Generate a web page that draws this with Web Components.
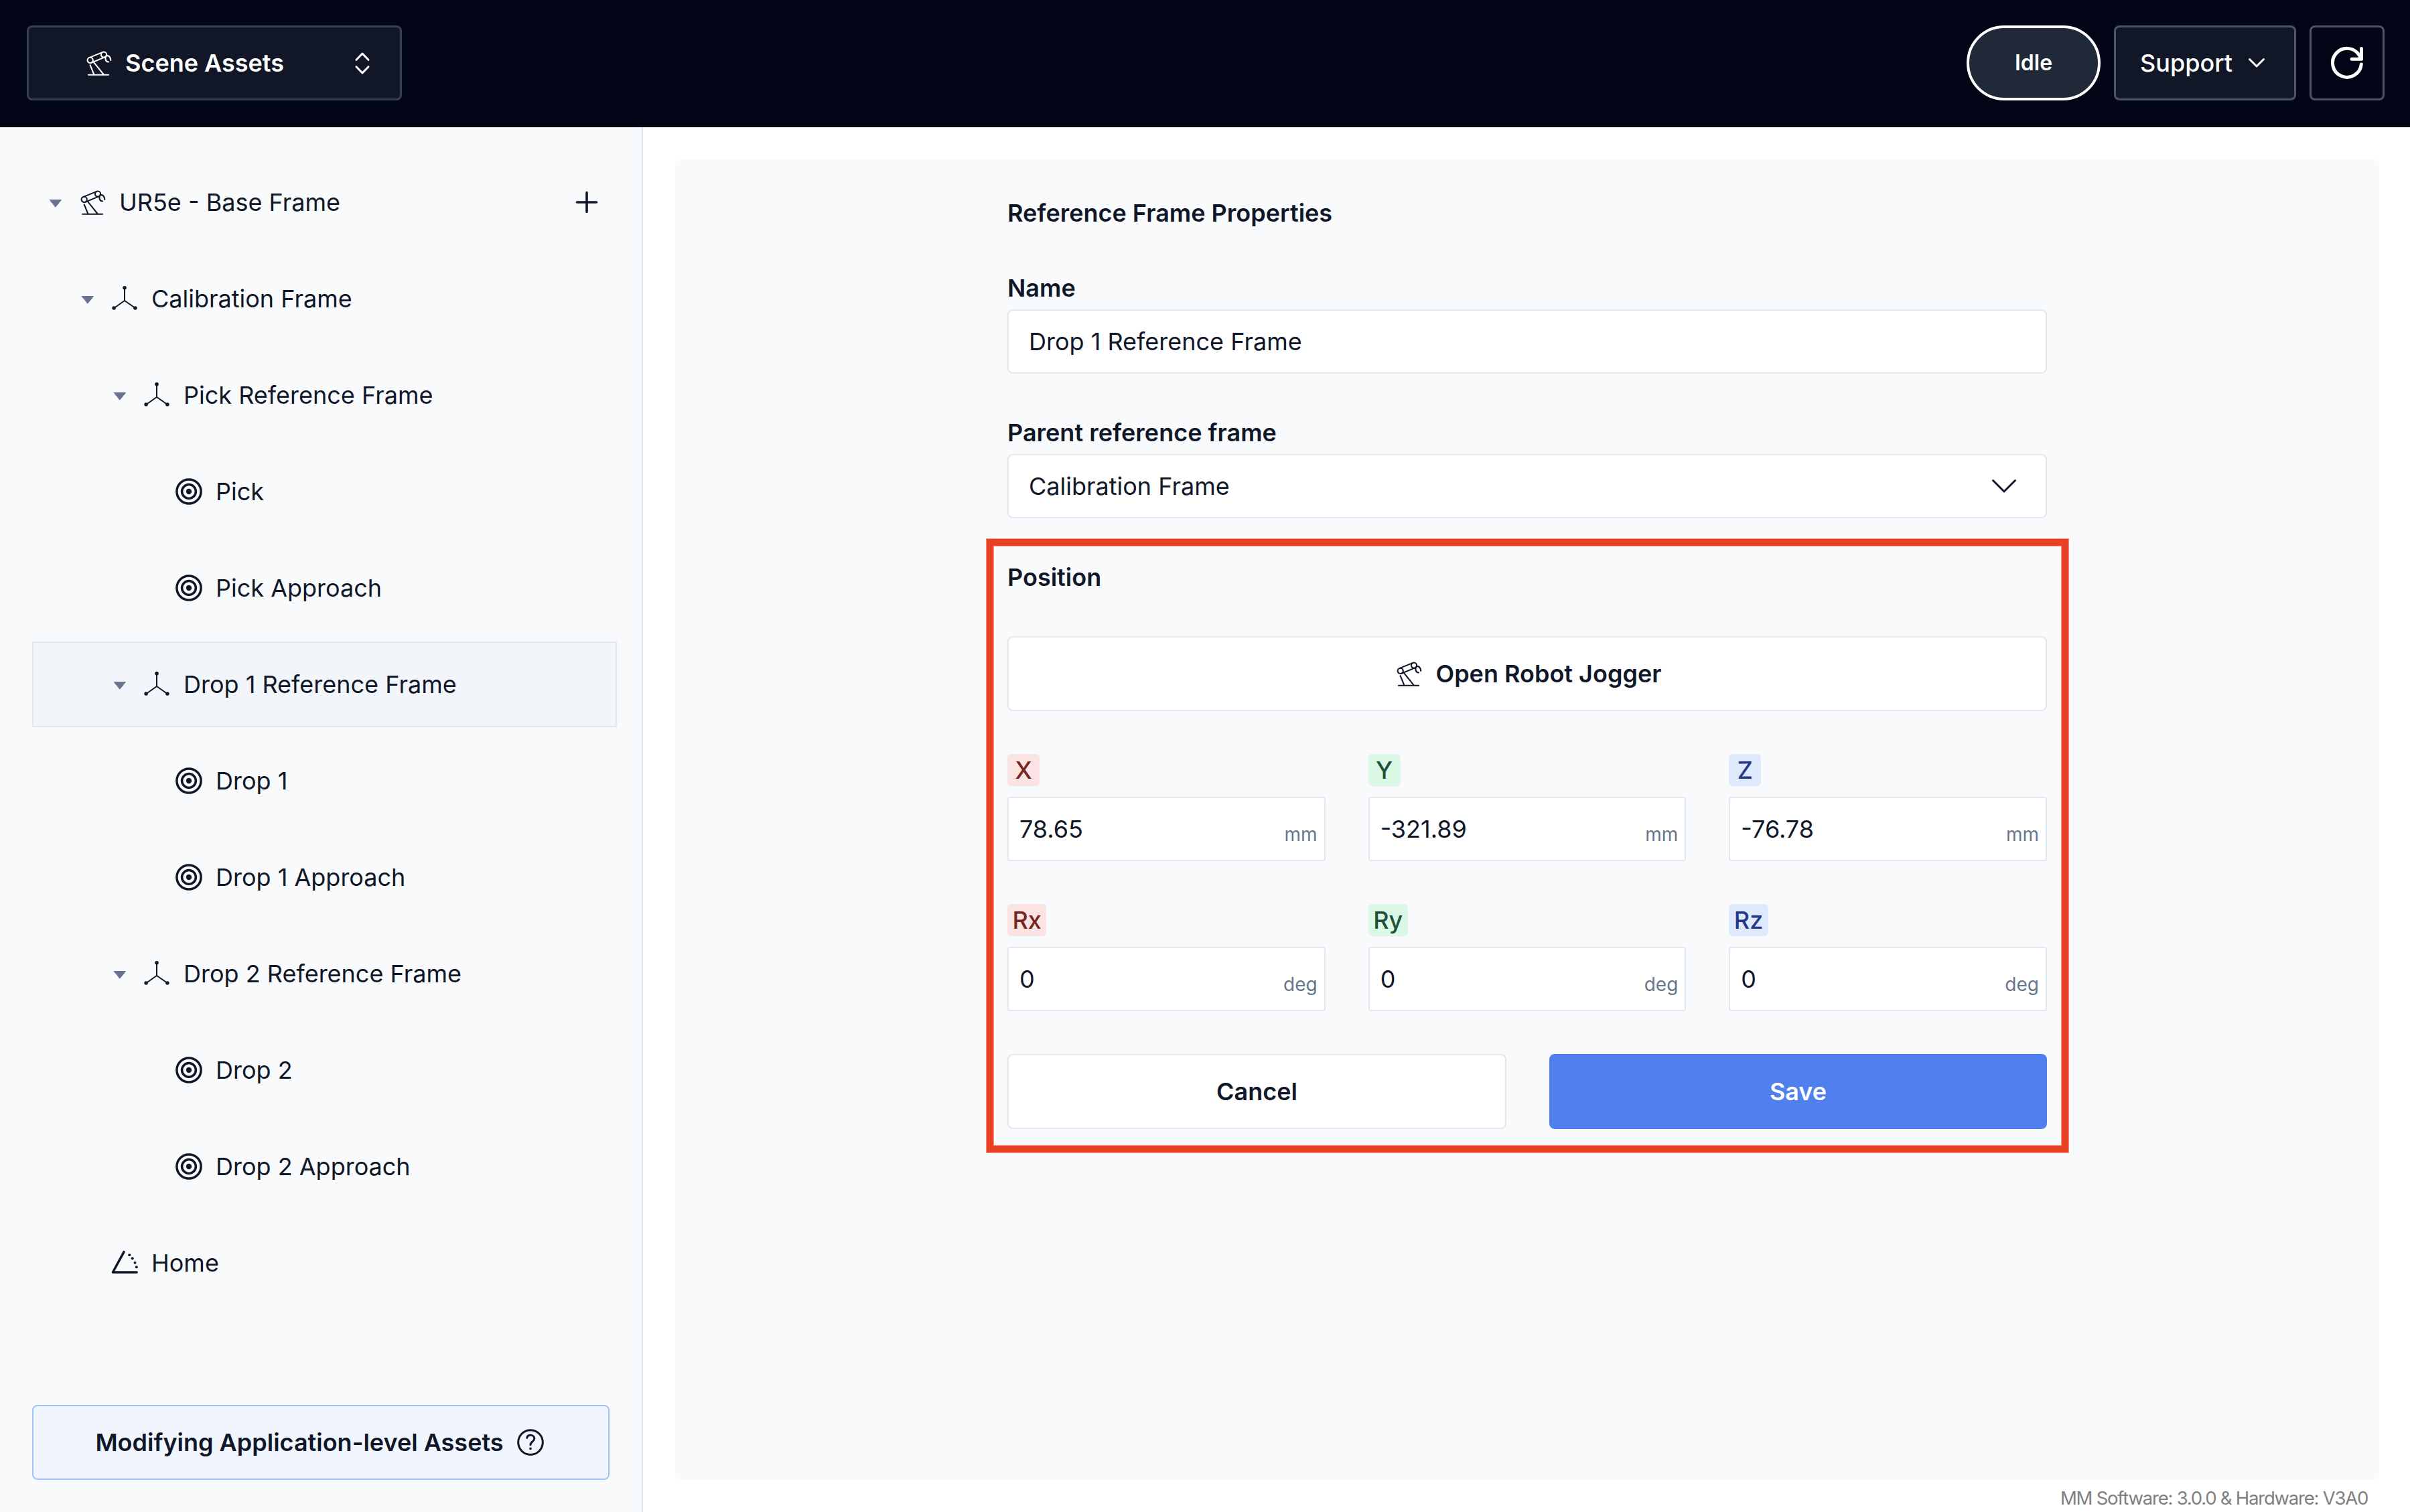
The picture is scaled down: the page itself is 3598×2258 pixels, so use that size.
<!DOCTYPE html>
<html lang="en">
<head>
<meta charset="utf-8">
<title>Scene Assets</title>
<style>
html, body { margin: 0; height: 100%; }
body {
  font-family: Inter, "Liberation Sans", sans-serif;
  font-size: 36px; line-height: 48px; color: #101729; background: #fff;
  --line: #e2e8ef; --muted: #67768d; --surface: #f9fafc;
  overflow: hidden;
}
</style>
</head>
<body>
<scene-app></scene-app>
<script>
const define = (name, html, setup) => {
  const template = document.createElement('template');
  template.innerHTML = html;
  customElements.define(name, class extends HTMLElement {
    constructor() {
      super();
      this.attachShadow({ mode: 'open' });
    }
    connectedCallback() {
      if (this.shadowRoot.childNodes.length) return;
      this.shadowRoot.append(template.content.cloneNode(true));
      if (setup) setup(this, this.shadowRoot);
    }
  });
};

/* name: [width, height, markup] */
const ICONS = {
  robot: [40, 40, `<g transform="translate(1 1.3)" stroke-width="2.1"><circle cx="6.7" cy="14.6" r="4.1"/><circle cx="27" cy="6.3" r="4.1"/>
    <path d="M5.2 10.8 25.4 2.6M8.3 18.4 28.4 10.1M6.7 22 12.4 36M11.7 17.4 26.8 36M4 36.4H34"/>
    <path d="M30.4 8.2C33.6 7 36.9 9 37.3 14.6M30.2 8.8C28.2 13 30 17 34 17.2"/></g>`],
  frame: [40, 40, `<path stroke-width="2" d="M20 4V23L4.4 34M20 23 35.8 34"/>
    <g fill="currentColor" stroke="none"><circle cx="20" cy="3.7" r="2.8"/><circle cx="4.1" cy="34" r="2.8"/><circle cx="35.9" cy="34" r="2.8"/></g>`],
  target: [40, 40, `<g stroke-width="3.5"><circle cx="20" cy="20" r="18.1"/><circle cx="20" cy="20" r="10.4"/></g><circle cx="20" cy="20" r="4.200" fill="currentColor" stroke="none"/>`],
  home: [40, 40, `<path stroke-width="3.5" d="M19 3.6 2.4 34H38.2"/>
    <g fill="currentColor" stroke="none"><circle cx="27.2" cy="8.3" r="2"/><circle cx="31.7" cy="13.3" r="2"/><circle cx="35.5" cy="19.7" r="2"/><circle cx="37.8" cy="26.3" r="2"/></g>`],
  caret: [20, 14, `<path fill="currentColor" stroke-width="1" d="M1.5 1.5H18.5L10 12Z"/>`],
  plus: [34, 34, `<path stroke-width="3.6" d="M17 2.5V31.5M2.5 17H31.5"/>`],
  selector: [22, 34, `<path stroke-width="3" d="M2 12.3 11 3 20 12.3M2 22.7 11 32 20 22.7"/>`],
  chevron: [26, 16, `<path stroke-width="3" d="M2.5 2.5 13 13 23.5 2.5"/>`],
  chevronWide: [38, 22, `<path stroke-width="3" d="M2.5 2.5 19 19 35.5 2.5"/>`],
  refresh: [52, 52, `<path stroke-width="5" d="M47.5 4.5V20.2H33M47.3 28A21.5 21.5 0 1 1 44.2 14.5L47.5 20"/>`],
  help: [42, 42, `<circle cx="21" cy="21" r="18.3" stroke-width="3"/><path stroke-width="3" d="M15.7 14.3C16.2 11.5 18.6 10.3 21 10.3C24 10.3 26.8 12.3 26.8 15.5C26.8 19.8 21 19.7 21 24.7"/><circle cx="21" cy="30.3" r="1.9" fill="currentColor" stroke="none"/>`]
};

define('ui-icon', `<style>
  :host { display: block; flex: none; }
  svg { display: block; overflow: visible; }
</style>`, (el, root) => {
  const [w, h, body] = ICONS[el.getAttribute('name')];
  root.append(document.createRange().createContextualFragment(
    `<svg width="${w}" height="${h}" viewBox="0 0 ${w} ${h}" fill="none" stroke="currentColor" stroke-linecap="round" stroke-linejoin="round">${body}</svg>`));
});

define('ui-button', `<style>
  :host {
    display: flex; align-items: center; justify-content: center; box-sizing: border-box;
    height: 112px; border: 2px solid var(--line); border-radius: 8px;
    background: #fff; font-weight: 600; gap: 20px; white-space: nowrap;
  }
  :host([kind=primary]) { background: #4f80ee; border-color: #4f80ee; color: #fff; }
  :host([kind=notice]) { background: #f0f5fe; border-color: #9dc3f9; }
</style><slot></slot>`);

define('top-bar', `<style>
  :host { display: flex; align-items: center; justify-content: space-between; box-sizing: border-box;
    height: 190px; padding: 0 38px 2px 40px; background: #020515; color: #fff; }
  .box { display: flex; align-items: center; box-sizing: border-box; height: 112px; border: 3px solid #4b5565; border-radius: 8px; }
  .menu { width: 560px; padding: 0 45px 0 84px; background: #111727; border-color: #374151; font-weight: 600; }
  .menu span { flex: 1; padding-left: 20px; }
  .right { display: flex; gap: 20px; }
  .idle { width: 200px; justify-content: center; border: 4px solid #fff; border-radius: 56px; background: #202938; font-weight: 600; font-size: 32px; }
  .support { width: 272px; padding: 0 43px 0 36px; justify-content: space-between; background: #111727; font-weight: 500; }
  .refresh { width: 112px; justify-content: center; }
</style>
<div class="box menu"><ui-icon name="robot"></ui-icon><span>Scene Assets</span><ui-icon name="selector"></ui-icon></div>
<div class="right">
  <div class="box idle">Idle</div>
  <div class="box support"><span>Support</span><ui-icon name="chevron"></ui-icon></div>
  <div class="box refresh"><ui-icon name="refresh"></ui-icon></div>
</div>`);

define('tree-row', `<style>
  :host { display: flex; align-items: center; box-sizing: border-box; height: 128px; border: 2px solid transparent; white-space: nowrap; }
  :host([selected]) { background: #f2f5fa; border-color: var(--line); }
  .caret { width: 20px; margin-right: 25px; color: var(--muted); padding-top: 3px; }
  .label { flex: 1; padding-left: 20px; }
  .add { margin-right: 26px; }
</style>
<span class="caret"></span><span class="kind"></span><span class="label"><slot></slot></span>`, (el, root) => {
  el.style.paddingLeft = 23 + 48 * Number(el.getAttribute('level')) + 'px';
  const put = (name, parent) => {
    const icon = document.createElement('ui-icon');
    icon.setAttribute('name', name);
    parent.append(icon);
    return icon;
  };
  put(el.getAttribute('icon'), root.querySelector('.kind'));
  if (el.hasAttribute('open')) put('caret', root.querySelector('.caret'));
  if (el.hasAttribute('add')) put('plus', root).className = 'add';
});

define('asset-tree', `<style>
  :host { display: flex; flex-direction: column; box-sizing: border-box; width: 960px; padding: 48px 37px 48px 48px;
    border-right: 2px solid var(--line); background: var(--surface); }
  .rows { flex: 1; display: flex; flex-direction: column; gap: 16px; }
  ui-button { margin-right: 11px; padding-right: 3px; gap: 19px; }
</style>
<div class="rows">
  <tree-row level="0" icon="robot" open add>UR5e - Base Frame</tree-row>
  <tree-row level="1" icon="frame" open>Calibration Frame</tree-row>
  <tree-row level="2" icon="frame" open>Pick Reference Frame</tree-row>
  <tree-row level="3" icon="target">Pick</tree-row>
  <tree-row level="3" icon="target">Pick Approach</tree-row>
  <tree-row level="2" icon="frame" open selected>Drop 1 Reference Frame</tree-row>
  <tree-row level="3" icon="target">Drop 1</tree-row>
  <tree-row level="3" icon="target">Drop 1 Approach</tree-row>
  <tree-row level="2" icon="frame" open>Drop 2 Reference Frame</tree-row>
  <tree-row level="3" icon="target">Drop 2</tree-row>
  <tree-row level="3" icon="target">Drop 2 Approach</tree-row>
  <tree-row level="1" icon="home">Home</tree-row>
</div>
<ui-button kind="notice"><span>Modifying Application-level Assets</span><ui-icon name="help"></ui-icon></ui-button>`);

define('text-field', `<style>
  :host { display: flex; flex-direction: column; gap: 8px; }
  .label { font-weight: 600; }
  .box { display: flex; align-items: center; justify-content: space-between; box-sizing: border-box; height: 96px;
    padding: 0 43px 0 30px; border: 2px solid var(--line); border-radius: 8px; background: #fff; }
</style><div class="label"></div><div class="box"><slot></slot><slot name="end"></slot></div>`, (el, root) => {
  root.querySelector('.label').textContent = el.getAttribute('label');
});

define('axis-field', `<style>
  :host { display: flex; flex-direction: column; align-items: flex-start; gap: 16px; }
  .badge { box-sizing: border-box; min-width: 48px; height: 48px; padding: 0 7.5px; border-radius: 6px; text-align: center; font-weight: 500; }
  :host([tone=red]) .badge { background: #fae4e3; color: #782622; }
  :host([tone=green]) .badge { background: #dbf8e6; color: #1f503a; }
  :host([tone=blue]) .badge { background: #dee9fb; color: #263788; }
  .box { display: flex; align-items: center; justify-content: space-between; align-self: stretch; box-sizing: border-box;
    height: 96px; padding: 0 10px 0 16px; border: 2px solid var(--line); border-radius: 4px; background: #fff; }
  .unit { font-size: 28px; line-height: 40px; padding-top: 16px; color: var(--muted); }
</style><div class="badge"></div><div class="box"><slot></slot><span class="unit"></span></div>`, (el, root) => {
  root.querySelector('.badge').textContent = el.getAttribute('axis');
  root.querySelector('.unit').textContent = el.getAttribute('unit');
});

define('frame-form', `<style>
  :host { display: flex; flex-direction: column; width: 1552px; }
  .title { font-weight: 600; margin-bottom: 64px; }
  .second { margin-top: 64px; }
  section { display: flex; flex-direction: column; gap: 64px; margin: 31px -32px 0 -31px; padding: 23px 22px 25px 21px;
    border: 10px solid #ea4126; box-shadow: 0 0 0 1px #ea412690, inset 0 0 0 1px #ea412690; }
  .grid { display: grid; grid-template-columns: repeat(3, 1fr); gap: 64px; }
  .actions { display: grid; grid-template-columns: 745px 1fr; gap: 64px; }
  .head { font-weight: 600; }
  .jog { padding-left: 4px; }
</style>
<div class="title">Reference Frame Properties</div>
<text-field label="Name">Drop 1 Reference Frame</text-field>
<text-field class="second" label="Parent reference frame">Calibration Frame<ui-icon slot="end" name="chevronWide"></ui-icon></text-field>
<section>
  <div class="head">Position</div>
  <ui-button class="jog"><ui-icon name="robot"></ui-icon><span>Open Robot Jogger</span></ui-button>
  <div class="grid">
    <axis-field axis="X" unit="mm" tone="red">78.65</axis-field>
    <axis-field axis="Y" unit="mm" tone="green">-321.89</axis-field>
    <axis-field axis="Z" unit="mm" tone="blue">-76.78</axis-field>
    <axis-field axis="Rx" unit="deg" tone="red">0</axis-field>
    <axis-field axis="Ry" unit="deg" tone="green">0</axis-field>
    <axis-field axis="Rz" unit="deg" tone="blue">0</axis-field>
  </div>
  <div class="actions"><ui-button>Cancel</ui-button><ui-button kind="primary">Save</ui-button></div>
</section>`);

define('scene-app', `<style>
  :host { display: flex; flex-direction: column; height: 100vh; }
  .body { flex: 1; display: flex; min-height: 0; }
  main { flex: 1; display: flex; flex-direction: column; padding: 48px 46px 0 48px; }
  .panel { flex: 1; display: flex; justify-content: center; align-items: flex-start; padding-top: 56px; border-radius: 8px; background: var(--surface); }
  footer { height: 48px; line-height: 54px; padding-right: 17px; text-align: right; font-size: 27.5px; letter-spacing: -1.23px; color: #808080; }
</style>
<top-bar></top-bar>
<div class="body">
  <asset-tree></asset-tree>
  <main>
    <div class="panel"><frame-form></frame-form></div>
    <footer>MM Software: 3.0.0 &amp; Hardware: V3A0</footer>
  </main>
</div>`);
</script>
</body>
</html>
